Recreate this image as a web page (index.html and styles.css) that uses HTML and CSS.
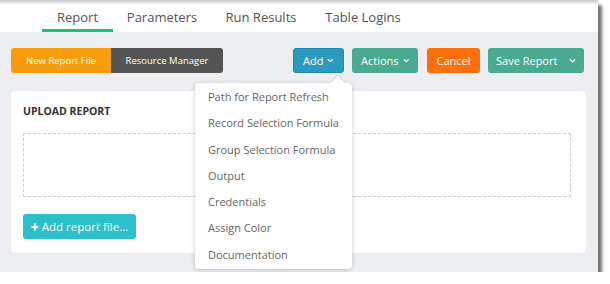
FILE: index.html
```html
<!DOCTYPE html>
<html>
<head>
<meta charset="utf-8">
<link rel="stylesheet" href="styles.css">
</head>
<body>
<div class="window">
  <nav class="tabs">
    <a class="tab active">Report</a>
    <a class="tab">Parameters</a>
    <a class="tab">Run Results</a>
    <a class="tab">Table Logins</a>
  </nav>
  <main class="content">
    <div class="toolbar">
      <div class="seg">
        <button class="btn seg-on">New Report File</button>
        <button class="btn seg-off">Resource Manager</button>
      </div>
      <div class="actions">
        <button class="btn btn-add">Add <svg class="chev" viewBox="0 0 8 5"><path d="M1 1l3 3 3-3" /></svg></button>
        <button class="btn btn-green btn-actions">Actions <svg class="chev" viewBox="0 0 8 5"><path d="M1 1l3 3 3-3" /></svg></button>
        <button class="btn btn-cancel">Cancel</button>
        <button class="btn btn-green btn-save"><span>Save Report</span><svg class="chev" viewBox="0 0 8 5"><path d="M1 1l3 3 3-3" /></svg></button>
      </div>
    </div>
    <section class="card">
      <h2 class="card-title">UPLOAD REPORT</h2>
      <div class="dropzone"></div>
      <button class="btn btn-teal"><svg class="plus" viewBox="0 0 8 8"><path d="M4 0.5v7M0.5 4h7" /></svg>Add report file...</button>
    </section>
  </main>
  <ul class="menu">
    <li>Path for Report Refresh</li>
    <li>Record Selection Formula</li>
    <li>Group Selection Formula</li>
    <li>Output</li>
    <li>Credentials</li>
    <li>Assign Color</li>
    <li>Documentation</li>
  </ul>
</div>
</body>
</html>
```
FILE: styles.css
```css
* { box-sizing: border-box; }
html, body { margin: 0; padding: 0; background: #fff; }
body { font-family: "Open Sans", "Liberation Sans", sans-serif; }

.window {
  position: relative;
  width: 598px;
  height: 272px;
  background: #eceef2;
  box-shadow: 4px 5px 3px rgba(0,0,0,0.55);
  display: flex;
  flex-direction: column;
}
.window::before {
  content: "";
  position: absolute;
  left: 0; right: 0; top: 0;
  height: 5px;
  background: linear-gradient(#c8c8c8, rgba(255,255,255,0));
  pointer-events: none;
}

.tabs {
  height: 32px;
  background: #fff;
  display: flex;
  padding-left: 42px;
  align-items: stretch;
}
.tab {
  font-size: 13px;
  color: #555;
  padding: 8px 0 0;
  text-align: center;
  white-space: nowrap;
  border-bottom: 3px solid transparent;
}
.tab:nth-child(1) { width: 71px; }
.tab:nth-child(2) { width: 98px; }
.tab:nth-child(3) { width: 100px; }
.tab:nth-child(4) { width: 104px; }
.tab.active { border-bottom-color: #1fbf7e; }

.content {
  padding: 16px 12px 0 11px;
  display: flex;
  flex-direction: column;
  gap: 18px;
}

.toolbar {
  display: flex;
  justify-content: space-between;
  height: 25px;
  padding-right: 2px;
}
.btn {
  font-family: inherit;
  border: 0;
  color: #fff;
  height: 25px;
  border-radius: 3px;
  font-size: 11px;
  padding: 0 9px;
  display: inline-flex;
  align-items: center;
  justify-content: center;
  gap: 4px;
  white-space: nowrap;
}
.seg { display: flex; }
.seg .btn { font-size: 9.5px; }
.seg-on { background: #f99c0c; width: 100px; border-radius: 3px 0 0 3px; }
.seg-off { background: #545454; width: 112px; border-radius: 0 3px 3px 0; }

.actions { display: flex; gap: 8px; }
.btn-add { background: #2a9ac0; width: 51px; border: 1px solid #1f88ad; }
.btn-green { background: #4aaa8f; }
.btn-actions { width: 66px; margin-right: 1px; }
.btn-cancel { background: #fd6f0b; width: 53px; }
.btn-save { width: 96px; justify-content: space-between; padding: 0 8px 0 8px; }
.chev { width: 7px; height: 5px; fill: none; stroke: #fff; stroke-width: 1.5; }

.card {
  background: #fff;
  border-radius: 3px;
  height: 162px;
  padding: 13px 15px 0 12px;
  box-shadow: 0 0 1px rgba(0,0,0,0.12);
}
.card-title {
  margin: 0;
  font-size: 10.5px;
  font-weight: 700;
  color: #333;
}
.dropzone {
  margin-top: 15px;
  height: 64px;
  border: 1px dashed #cfcfcf;
}
.btn-teal {
  margin-top: 17px;
  background: #2cc0cc;
  width: 113px;
  font-size: 11.5px;
  padding: 0;
  gap: 3px;
}
.plus { width: 8px; height: 8px; stroke: #fff; stroke-width: 2.2; fill: none; }

.menu {
  position: absolute;
  left: 195px;
  top: 83px;
  width: 157px;
  margin: 0;
  padding: 2px 0 0;
  list-style: none;
  background: #fff;
  border-radius: 4px;
  box-shadow: 0 1px 5px rgba(0,0,0,0.2);
}
.menu::before {
  content: "";
  position: absolute;
  top: -5px;
  left: 138px;
  width: 10px;
  height: 10px;
  background: #fff;
  transform: rotate(45deg);
  box-shadow: -1px -1px 2px rgba(0,0,0,0.08);
}
.menu li {
  position: relative;
  height: 26.3px;
  line-height: 24px;
  padding-left: 13px;
  font-size: 11px;
  color: #666;
}
```
